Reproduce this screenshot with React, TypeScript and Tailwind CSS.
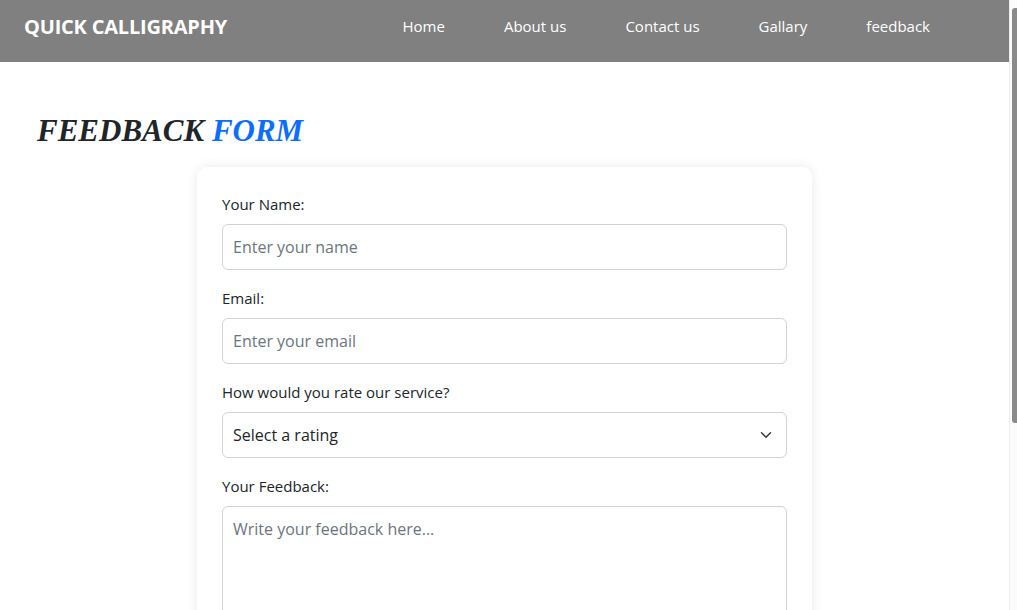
import React from 'react';

const navLinks = ['Home', 'About us', 'Contact us', 'Gallary', 'feedback'];

const inputCls =
  'w-full h-[46px] rounded-[6px] border border-[#cfd4d9] bg-white px-[10px] text-[16px] text-[#212529] placeholder:text-[#6c757d] outline-none';

const App = () => {
  return (
    <div className="flex h-[610px] w-[1017px] overflow-hidden bg-white font-['Open_Sans',sans-serif]">
      <div className="flex-1 min-w-0">
        {/* Header */}
        <nav className="flex h-[62px] items-start justify-between bg-[#808080] pt-[14px] pl-[24px] pr-[79px]">
          <h1 className="text-[20px] font-bold leading-[26px] tracking-[-0.2px] text-white">QUICK CALLIGRAPHY</h1>
          <ul className="flex gap-[59px]">
            {navLinks.map((link) => (
              <li key={link} className="text-[15px] leading-[24px] text-white">
                {link}
              </li>
            ))}
          </ul>
        </nav>

        {/* Title */}
        <h2 className="pt-[50px] pl-[37px] font-['Liberation_Serif',serif] text-[31px] font-bold italic leading-[38px] tracking-[0px] text-[#212529]">
          FEEDBACK <span className="text-[#0d6efd]">FORM</span>
        </h2>

        {/* Form card */}
        <form className="mx-auto mt-[17px] w-[615px] rounded-[10px] bg-white px-[25px] pt-[25px] pb-[30px] shadow-[0_0_12px_rgba(0,0,0,0.09)]">
          <div className="mb-[16px]">
            <label className="mb-[8px] block text-[15px] leading-[24px] text-[#212529]">Your Name:</label>
            <input type="text" placeholder="Enter your name" className={inputCls} />
          </div>
          <div className="mb-[16px]">
            <label className="mb-[8px] block text-[15px] leading-[24px] text-[#212529]">Email:</label>
            <input type="email" placeholder="Enter your email" className={inputCls} />
          </div>
          <div className="mb-[16px]">
            <label className="mb-[8px] block text-[15px] leading-[24px] text-[#212529]">How would you rate our service?</label>
            <div className="relative">
              <select defaultValue="" className={`${inputCls} appearance-none`}>
                <option value="">Select a rating</option>
                <option value="5">Excellent</option>
                <option value="4">Good</option>
                <option value="3">Average</option>
                <option value="2">Poor</option>
              </select>
              <svg
                className="pointer-events-none absolute right-[15px] top-1/2 -translate-y-1/2"
                width="12"
                height="12"
                viewBox="0 0 16 16"
                fill="none"
                stroke="#343a40"
                strokeWidth="2"
                strokeLinecap="round"
                strokeLinejoin="round"
              >
                <path d="M2 5l6 6 6-6" />
              </svg>
            </div>
          </div>
          <div>
            <label className="mb-[8px] block text-[15px] leading-[24px] text-[#212529]">Your Feedback:</label>
            <textarea
              placeholder="Write your feedback here..."
              className="block h-[140px] w-full resize-none rounded-[6px] border border-[#cfd4d9] px-[10px] py-[10px] text-[16px] text-[#212529] placeholder:text-[#6c757d] outline-none"
            />
          </div>
        </form>
      </div>

      {/* Scrollbar */}
      <div className="w-[8px] border-l border-[#ececec] bg-[#fbfbfb] pt-[8px] pl-[2px]">
        <div className="h-[415px] w-[5px] rounded-l-[3px] bg-[#8a8a8a]" />
      </div>
    </div>
  );
};

export default App;
